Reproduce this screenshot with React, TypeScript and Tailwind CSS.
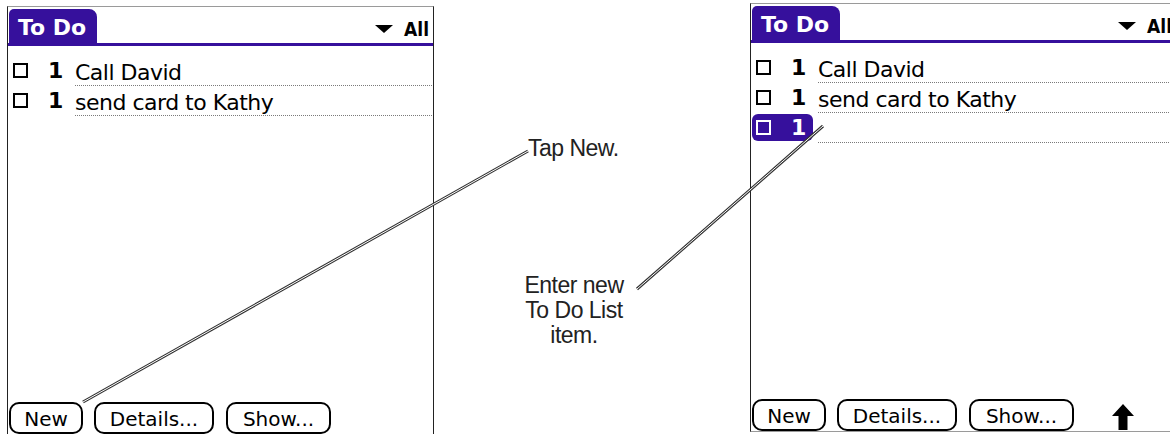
import React from "react";

const PURPLE = "bg-[#36109c]";

function Row({ text, selected }: { text: string; selected?: boolean }) {
  return (
    <div className="flex h-[30px] items-end">
      <div
        className={`mb-[2px] ml-[1px] flex h-[27px] w-[61px] shrink-0 items-center rounded-[6px] ${
          selected ? "bg-[#36109c] text-white" : "text-black"
        }`}
      >
        <div
          className={`ml-[4px] box-border h-[15px] min-h-[15px] w-[15px] min-w-[15px] shrink-0 border-2 ${
            selected ? "border-white" : "border-black"
          }`}
        />
        <span className="ml-[20px] text-[22px] font-bold leading-none">1</span>
      </div>
      <div className="ml-[5px] flex h-[23px] flex-1 items-start bg-[linear-gradient(to_right,#7a7a7a_1px,transparent_1px)] bg-[length:2px_1px] bg-bottom bg-repeat-x">
        <span className="whitespace-nowrap text-[22px] leading-[20px] tracking-[-0.5px] text-black">{text}</span>
      </div>
    </div>
  );
}

function Button({ label, w }: { label: string; w: string }) {
  return (
    <div
      className={`flex h-[32px] ${w} items-center justify-center rounded-[10px] border-2 border-black pt-[2px] text-[20px] leading-none text-black`}
    >
      {label}
    </div>
  );
}

function Panel({ top, selectedRow, arrow }: { top: string; selectedRow?: boolean; arrow?: boolean }) {
  return (
    <div
      className={`${top} flex h-[429px] w-[427px] shrink-0 flex-col border-x border-y border-x-[#222] border-y-[#9a9a9a] bg-white font-['DejaVu_Sans',sans-serif]`}
    >
      <div className="flex h-[36px] items-start justify-between">
        <div
          className={`ml-[1px] mt-[2px] flex h-[34px] w-[88px] items-start rounded-tl-[5px] rounded-tr-[8px] ${PURPLE} pl-[9px] pt-[8px]`}
        >
          <span className="whitespace-nowrap text-[22px] font-bold leading-none text-white">To Do</span>
        </div>
        <div className="mb-[4px] mr-[4px] flex items-center self-end">
          <svg width="18" height="8" viewBox="0 0 18 8" className="mr-[11px] mt-[-2px]">
            <path d="M0 0 L18 0 L9 8 Z" fill="#000" />
          </svg>
          <span className="font-['DejaVu_Sans_Condensed','DejaVu_Sans',sans-serif] text-[19px] font-bold leading-none text-black">
            All
          </span>
        </div>
      </div>
      <div className={`h-[3px] w-full ${PURPLE}`} />
      <div className="mt-[10px] flex flex-col">
        <Row text="Call David" />
        <Row text="send card to Kathy" />
        {selectedRow && <Row text="" selected />}
      </div>
      <div className="flex-1" />
      <div className="ml-[1px] flex items-end">
        <Button label="New" w="w-[74px]" />
        <div className="ml-[11px]">
          <Button label="Details..." w="w-[120px]" />
        </div>
        <div className="ml-[12px]">
          <Button label="Show..." w="w-[105px]" />
        </div>
        {arrow && (
          <svg width="22" height="26" viewBox="0 0 22 26" className="mb-[1px] ml-[38px]">
            <path d="M11 0 L22 12 L15.5 12 L15.5 26 L6.5 26 L6.5 12 L0 12 Z" fill="#000" />
          </svg>
        )}
      </div>
    </div>
  );
}

export default function App() {
  return (
    <div className="relative flex h-[434px] w-[1170px] overflow-hidden bg-white">
      <div className="ml-[7px] flex">
        <Panel top="mt-[6px]" />
      </div>
      <div className="flex w-[316px] shrink-0 flex-col font-['Liberation_Sans',Arial,sans-serif] text-[23px] leading-[25px] tracking-[-0.5px] text-[#222]">
        <div className="pl-[94px] pt-[136px] whitespace-nowrap">Tap New.</div>
        <div className="ml-[76px] mt-[112px] w-[128px] text-center">
          <div>Enter new</div>
          <div>To Do List</div>
          <div>item.</div>
        </div>
      </div>
      <Panel top="mt-[3px]" selectedRow arrow />
      <svg
        className="pointer-events-none absolute left-0 top-0"
        width="1170"
        height="434"
        viewBox="0 0 1170 434"
      >
        <line x1="83" y1="402" x2="528" y2="151" stroke="#333" strokeWidth="3" />
        <line x1="83" y1="402" x2="528" y2="151" stroke="#fff" strokeWidth="1" />
        <line x1="637" y1="289" x2="823" y2="126" stroke="#333" strokeWidth="3" />
        <line x1="637" y1="289" x2="823" y2="126" stroke="#fff" strokeWidth="1" />
      </svg>
    </div>
  );
}
